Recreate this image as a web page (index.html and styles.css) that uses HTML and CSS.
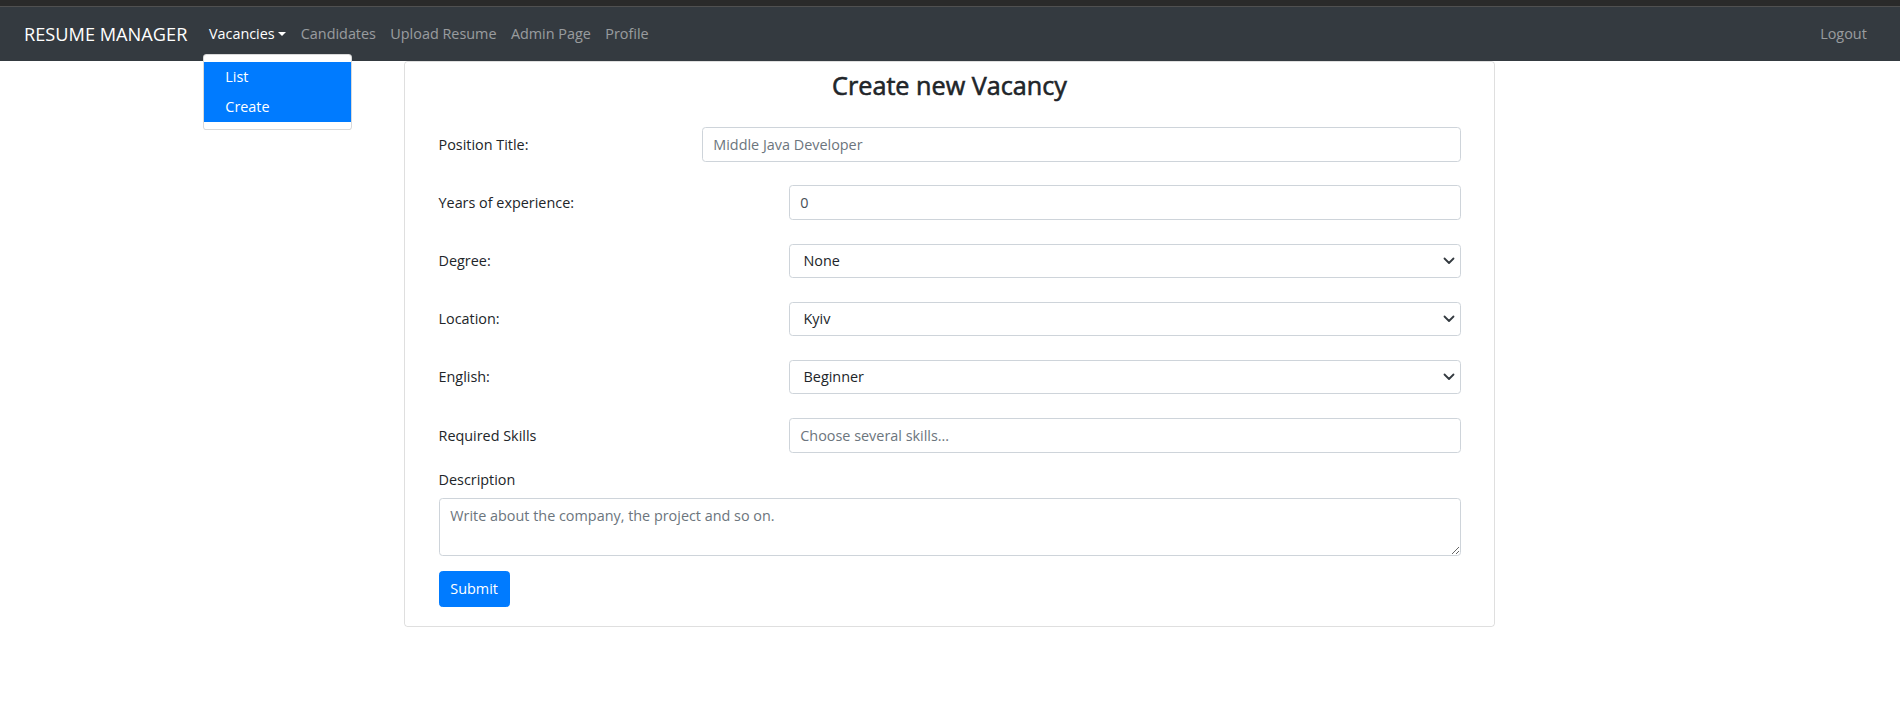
FILE: index.html
```html
<!DOCTYPE html>
<html lang="en">
<head>
<meta charset="utf-8">
<title>Resume Manager - Create new Vacancy</title>
<link rel="stylesheet" href="styles.css">
</head>
<body>
<div class="topstrip"></div>
<nav class="navbar">
  <a class="brand" href="#">RESUME MANAGER</a>
  <ul class="nav">
    <li class="nav-item dropdown">
      <a class="nav-link active toggle" href="#">Vacancies</a>
      <div class="dropdown-menu">
        <a class="dropdown-item" href="#">List</a>
        <a class="dropdown-item" href="#">Create</a>
      </div>
    </li>
    <li class="nav-item"><a class="nav-link" href="#">Candidates</a></li>
    <li class="nav-item"><a class="nav-link" href="#">Upload Resume</a></li>
    <li class="nav-item"><a class="nav-link" href="#">Admin Page</a></li>
    <li class="nav-item"><a class="nav-link" href="#">Profile</a></li>
  </ul>
  <a class="nav-link logout" href="#">Logout</a>
</nav>

<main class="page">
  <section class="card">
    <h3 class="title">Create new Vacancy</h3>
    <form class="form">
      <div class="row row-narrow">
        <label class="label" for="position">Position Title:</label>
        <input class="control" id="position" type="text" placeholder="Middle Java Developer">
      </div>
      <div class="row">
        <label class="label" for="years">Years of experience:</label>
        <input class="control control-num" id="years" type="text" value="0">
      </div>
      <div class="row">
        <label class="label" for="degree">Degree:</label>
        <div class="select-wrap">
          <select class="control select" id="degree"><option>None</option></select>
          <svg class="chevron" width="12" height="8" viewBox="0 0 12 8"><path d="M1.5 1.5l4.5 4.5 4.5-4.5" fill="none" stroke="#343a40" stroke-width="1.8" stroke-linecap="round" stroke-linejoin="round"/></svg>
        </div>
      </div>
      <div class="row">
        <label class="label" for="location">Location:</label>
        <div class="select-wrap">
          <select class="control select" id="location"><option>Kyiv</option></select>
          <svg class="chevron" width="12" height="8" viewBox="0 0 12 8"><path d="M1.5 1.5l4.5 4.5 4.5-4.5" fill="none" stroke="#343a40" stroke-width="1.8" stroke-linecap="round" stroke-linejoin="round"/></svg>
        </div>
      </div>
      <div class="row">
        <label class="label" for="english">English:</label>
        <div class="select-wrap">
          <select class="control select" id="english"><option>Beginner</option></select>
          <svg class="chevron" width="12" height="8" viewBox="0 0 12 8"><path d="M1.5 1.5l4.5 4.5 4.5-4.5" fill="none" stroke="#343a40" stroke-width="1.8" stroke-linecap="round" stroke-linejoin="round"/></svg>
        </div>
      </div>
      <div class="row row-last">
        <label class="label" for="skills">Required Skills</label>
        <input class="control" id="skills" type="text" placeholder="Choose several skills...">
      </div>
      <div class="group">
        <label class="label label-block" for="description">Description</label>
        <textarea class="control textarea" id="description" rows="2" placeholder="Write about the company, the project and so on."></textarea>
      </div>
      <button class="btn" type="submit">Submit</button>
    </form>
  </section>
</main>
</body>
</html>
```

FILE: styles.css
```css
* {
  box-sizing: border-box;
}

html, body {
  margin: 0;
  padding: 0;
  background: #ffffff;
}

body {
  font-family: "Open Sans", "Noto Sans", "Liberation Sans", sans-serif;
  font-size: 14.4px;
  line-height: 1.5;
  color: #212529;
}

a {
  text-decoration: none;
}

.topstrip {
  height: 7px;
  background: #2a2a2a;
  border-bottom: 1px solid #505050;
}

.navbar {
  height: 54px;
  background: #343a40;
  display: flex;
  align-items: center;
  padding: 0 26px 0 24px;
}

.brand {
  color: #ffffff;
  font-size: 18.2px;
  line-height: 27px;
  margin-right: 14.4px;
  white-space: nowrap;
}

.nav {
  list-style: none;
  margin: 0;
  padding: 0;
  display: flex;
  flex: 1;
}

.nav-item {
  position: relative;
}

.nav-link {
  display: block;
  padding: 0 7.2px;
  color: rgba(255, 255, 255, 0.5);
  font-size: 14.4px;
  line-height: 21.6px;
  white-space: nowrap;
}

.nav-link.active {
  color: #ffffff;
}

.toggle::after {
  content: "";
  display: inline-block;
  margin-left: 0.255em;
  vertical-align: 0.255em;
  border-top: 0.3em solid;
  border-right: 0.3em solid transparent;
  border-left: 0.3em solid transparent;
  border-bottom: 0;
}

.dropdown-menu {
  position: absolute;
  top: 31px;
  left: 1px;
  width: 149px;
  padding: 7px 0;
  background: #ffffff;
  border: 1px solid rgba(0, 0, 0, 0.15);
  border-radius: 3.6px;
  z-index: 10;
  display: flex;
  flex-direction: column;
}

.dropdown-item {
  display: block;
  height: 30px;
  line-height: 30px;
  padding: 0 21.6px;
  color: #ffffff;
  background: #007bff;
  font-size: 14.4px;
}

.page {
  display: flex;
  justify-content: center;
  padding-right: 1px;
}

.card {
  width: 1091px;
  border: 1px solid rgba(0, 0, 0, 0.125);
  border-radius: 3.6px;
  padding: 8px 33.5px 19px;
}

.title {
  margin: 0 0 27px;
  text-align: center;
  font-size: 25.2px;
  font-weight: 500;
  line-height: 1.2;
  color: #212529;
  -webkit-text-stroke: 0.6px #212529;
}

.form {
  display: flex;
  flex-direction: column;
}

.row {
  display: grid;
  grid-template-columns: 350px 1fr;
  align-items: center;
  margin-bottom: 23.8px;
}

.row-narrow {
  grid-template-columns: 263px 1fr;
}

.row-last {
  margin-bottom: 16.8px;
}

.label {
  color: #212529;
  font-size: 14.4px;
  line-height: 21.6px;
}

.label-block {
  display: block;
  margin-bottom: 7.5px;
}

.control {
  display: block;
  width: 100%;
  height: 34.4px;
  padding: 0 10.8px;
  font-family: inherit;
  font-size: 14.4px;
  line-height: 21.6px;
  color: #212529;
  background: #ffffff;
  border: 1px solid #ced4da;
  border-radius: 3.6px;
  outline: none;
}

.control::placeholder {
  color: #6c757d;
  opacity: 1;
}

.control-num {
  color: #495057;
}

.select-wrap {
  position: relative;
}

.select {
  appearance: none;
  -webkit-appearance: none;
  padding-left: 14px;
  padding-right: 36px;
}

.chevron {
  position: absolute;
  right: 6px;
  top: 50%;
  margin-top: -4px;
  pointer-events: none;
}

.group {
  margin-bottom: 15.3px;
}

.textarea {
  height: 57.4px;
  padding: 5.4px 10.8px;
  resize: vertical;
}

.btn {
  align-self: flex-start;
  height: 35.7px;
  padding: 0 10.8px;
  font-family: inherit;
  font-size: 14.4px;
  line-height: 21.6px;
  color: #ffffff;
  background: #007bff;
  border: 1px solid #007bff;
  border-radius: 3.6px;
}
```
